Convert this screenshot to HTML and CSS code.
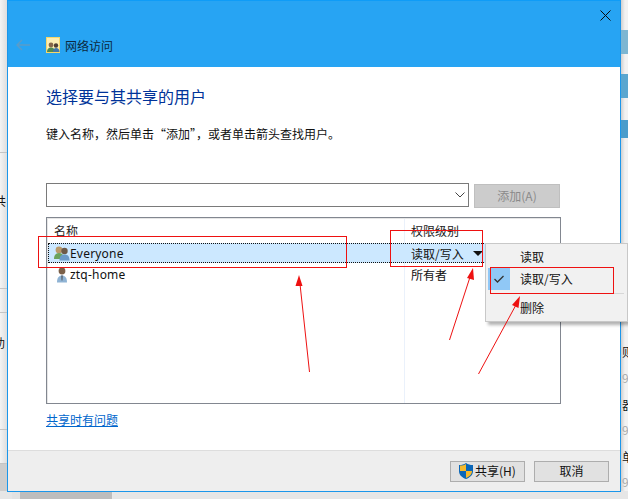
FILE: index.html
```html
<!DOCTYPE html>
<html lang="zh">
<head>
<meta charset="utf-8">
<title>网络访问</title>
<link rel="stylesheet" href="styles.css">
</head>
<body>
<div class="desktop">
  <div class="peek peek-left">
    <span class="frag f1">共</span><span class="frag f2">助</span>
    <i class="rule r1"></i><i class="rule r2"></i><i class="rule r3"></i><i class="rule r4"></i><i class="rule r5"></i>
    <i class="shade"></i>
  </div>
  <div class="peek peek-right">
    <i class="blot b1"></i><i class="blot b2"></i><i class="blot b3"></i>
    <span class="frag g1">则</span><span class="frag g2 dim">9</span><span class="frag g3">器</span><span class="frag g4 dim">9</span><span class="frag g5">单</span><span class="frag g6 dim">9</span>
  </div>
  <div class="under"><i></i></div>

  <main class="window">
    <header class="head">
      <svg class="close" viewBox="0 0 11 11" width="11" height="11"><path d="M.5.5l10 10M10.5.5l-10 10" stroke="#0b0b0b" fill="none"/></svg>
      <div class="nav">
        <svg class="back" viewBox="0 0 14 12" width="14" height="12"><path d="M6 1L1 6l5 5M1 6h13" stroke="#5a9cc9" stroke-width="1.4" fill="none"/></svg>
        <svg class="appicon" viewBox="0 0 14 16" width="14" height="16">
          <rect width="14" height="16" fill="#f5d76a"/><rect x="1" y="1" width="12" height="14" fill="#fbeeb4"/>
          <circle cx="5" cy="8" r="2.400" fill="#86684a"/><path d="M1 15c0-3 1.500-4.500 4-4.500S9 12 9 15z" fill="#4f8a55"/>
          <circle cx="10" cy="8.500" r="2.200" fill="#4d3f35"/><path d="M7 15c0-2.500 1.300-4 3.200-4s3.300 1.500 3.300 4z" fill="#3f78ad"/>
        </svg>
        <span class="title">网络访问</span>
      </div>
    </header>

    <section class="content">
      <h1 class="heading">选择要与其共享的用户</h1>
      <p class="hint">键入名称，然后单击“添加”，或者单击箭头查找用户。</p>
      <div class="addrow">
        <div class="combo">
          <svg viewBox="0 0 10 6" width="10" height="6"><path d="M.5.5L5 5 9.500.5" stroke="#444" fill="none"/></svg>
        </div>
        <div class="addbtn">添加(A)</div>
      </div>
      <div class="list">
        <div class="row rowhead"><span class="cname">名称</span><span class="cperm">权限级别</span></div>
        <div class="row selected">
          <span class="cname">
            <svg class="uicon" viewBox="0 0 16 16" width="16" height="16">
              <circle cx="5" cy="5" r="3.400" fill="#b99a6b"/><path d="M0 14c0-4 2-6 5-6s5 2 5 6z" fill="#6aa35c"/>
              <circle cx="10.500" cy="6" r="3.200" fill="#6d5a48"/><path d="M5.500 15.500c0-4 1.500-6 5-6s5 2 5 6z" fill="#6b9ac8"/>
            </svg>Everyone</span>
          <span class="cperm">读取/写入<i class="caret"></i></span>
        </div>
        <div class="row rowplain">
          <span class="cname">
            <svg class="uicon" viewBox="0 0 16 16" width="16" height="16">
              <circle cx="8" cy="4" r="3.400" fill="#7a5f48"/><path d="M3 15.500c0-5 2-7 5-7s5 2 5 7z" fill="#8fb3d4"/><path d="M7 8.500h2l-.4 5h-1.200z" fill="#5f6f7f"/>
            </svg>ztq-home</span>
          <span class="cperm">所有者</span>
        </div>
      </div>
      <a class="help" href="#">共享时有问题</a>
    </section>

    <footer class="foot">
      <button class="btn" type="button">
        <svg viewBox="0 0 14 16" width="14" height="16"><path d="M7 0c2 1.500 4 2 7 2v6c0 4-3 6.500-7 8-4-1.500-7-4-7-8V2c3 0 5-.5 7-2z" fill="#0a66b8"/><path d="M7 1v7H1V2.600C3.500 2.500 5.500 2 7 1zM7 8h6c0 3.500-2.500 5.500-6 7z" fill="#f6b92b"/></svg>共享(H)
      </button>
      <button class="btn" type="button">取消</button>
    </footer>
  </main>

  <div class="menu">
    <div class="mitem">读取</div>
    <div class="mitem checked"><i class="tick"><svg viewBox="0 0 10 8" width="10" height="8"><path d="M.5 4l3 3 6-6" stroke="#333" stroke-width="1.300" fill="none"/></svg></i>读取/写入</div>
    <div class="msep"></div>
    <div class="mitem">删除</div>
  </div>

  <svg class="marks" viewBox="0 0 628 499" width="628" height="499">
    <g fill="none" stroke="#ee1111">
      <rect x="38.500" y="236.500" width="308" height="31"/>
      <rect x="390.500" y="230.500" width="92" height="36"/>
      <rect x="490.500" y="267.500" width="123" height="26"/>
      <path d="M309.500 372L300 284M449.500 340L471 274M478.500 374L517 303"/>
    </g>
    <g fill="#ee1111">
      <path d="M299 275l-3.500 11h7z"/>
      <path d="M473 268l-6 10 7 2z"/>
      <path d="M520 296l-8 9 6.500 3z"/>
    </g>
  </svg>
</div>
</body>
</html>
```
FILE: styles.css
```css
* { box-sizing: border-box; }
html, body { margin: 0; height: 100%; overflow: hidden; background: #e4e4e4; }
body { font-family: "Noto Sans CJK SC", "Noto Sans", sans-serif; font-size: 12px; color: #111; }
.desktop { position: relative; width: 628px; height: 499px; overflow: hidden; padding-left: 7px; }

.peek { position: absolute; top: 0; height: 499px; }
.peek-left { left: 0; width: 7px; background: linear-gradient(90deg, #f4f4f4, #dedede); overflow: hidden; }
.peek-right { left: 621px; width: 7px; background: linear-gradient(90deg, #cfcfcf, #f2f2f2 4px); overflow: hidden; }
.frag { position: absolute; font-size: 12px; line-height: 14px; white-space: nowrap; }
.dim { color: #aaa; }
.f1 { left: -6px; top: 194px; }
.f2 { left: -7px; top: 336px; }
.g1 { left: 1px; top: 345px; }
.g2 { left: 1px; top: 371px; }
.g3 { left: 1px; top: 398px; }
.g4 { left: 1px; top: 423px; }
.g5 { left: 1px; top: 450px; }
.g6 { left: 1px; top: 475px; }
.rule { position: absolute; left: 0; width: 7px; height: 1px; background: #c4c4c4; }
.r1 { top: 152px; } .r2 { top: 288px; } .r3 { top: 312px; } .r4 { top: 429px; } .r5 { top: 463px; }
.shade { position: absolute; left: 0; top: 464px; width: 7px; height: 35px; background: #cdcdcd; }
.blot { position: absolute; left: 0; width: 7px; }
.b1 { top: 30px; height: 24px; background: #7db6d2; }
.b2 { top: 74px; height: 24px; background: #5aa6cf; }
.b3 { top: 120px; height: 18px; background: #4a9ccb; }
.under { position: absolute; left: 0; top: 491px; width: 628px; height: 8px; background: #e6e6e6; }
.under i { display: block; width: 101px; height: 8px; margin-left: 12px; background: #bdbdbd; border-left: 8px solid #e2e2e2; border-right: 1px solid #e8e8e8; }

.window { position: relative; z-index: 1; width: 614px; height: 492px; display: flex; flex-direction: column; background: #fff; border: 1px solid #1b96ea; border-top-color: #0f9cf7; }
.head { height: 66px; background: #27a4f3; display: flex; flex-direction: column; justify-content: flex-end; position: relative; flex: none; }
.close { position: absolute; right: 9px; top: 9px; }
.nav { display: flex; align-items: center; height: 38px; margin-bottom: 3px; padding: 0 0 0 8px; }
.back { margin-right: 16px; flex: none; }
.appicon { margin-right: 5px; flex: none; }
.title { font-size: 12px; color: #0c2a40; }

.content { flex: 1; padding: 0 59px 0 38px; display: flex; flex-direction: column; min-height: 0; }
.heading { margin: 17px 0 0; font-size: 16px; line-height: 24px; font-weight: 400; color: #003399; }
.hint { margin: 18px 0 0; font-size: 12px; line-height: 16px; color: #111; }
.addrow { display: flex; margin-top: 41px; gap: 5px; align-items: flex-start; }
.combo { width: 423px; height: 24px; border: 1px solid #7a7a7a; background: #fff; display: flex; align-items: center; justify-content: flex-end; padding-right: 3px; }
.addbtn { width: 86px; height: 24px; margin-top: 1px; background: #cccccc; border: 1px solid #bfbfbf; color: #8a8a8a; text-align: center; line-height: 21px; }
.list { width: 515px; height: 187px; margin-top: 9px; border: 1px solid #828790; box-shadow: inset 1px 1px 0 #e6e6e6; position: relative; background: linear-gradient(#eaf1fb, #eaf1fb) 357px 0 / 1px 100% no-repeat #fff; }
.row { display: flex; align-items: center; height: 21px; line-height: 21px; }
.rowhead { height: 25px; padding-bottom: 0; }
.rowplain { margin-top: 1px; }
.cname { width: 364px; padding-left: 7px; display: flex; align-items: center; flex: none; letter-spacing: .2px; }
.cperm { display: flex; align-items: center; }
.rowhead .cname, .rowhead .cperm { color: #222; letter-spacing: 0; }
.uicon { flex: none; }
.selected { height: 20px; background: #cce8ff; outline: 1px dotted #111; outline-offset: -1px; margin-left: 1px; }
.selected .cname { width: 363px; padding-left: 6px; }
.row .cname { font-family: "Noto Sans", "Noto Sans CJK SC", sans-serif; }
.rowhead .cname { font-family: "Noto Sans CJK SC", sans-serif; }
.caret { width: 0; height: 0; margin-left: 9px; border-left: 5px solid transparent; border-right: 5px solid transparent; border-top: 5px solid #111; }
.help { margin-top: 7px; color: #0066cc; line-height: 17px; text-decoration: underline; align-self: flex-start; }

.foot { height: 41px; flex: none; background: #eeeeee; border-top: 1px solid #dddddd; display: flex; justify-content: flex-end; align-items: center; gap: 9px; padding: 0 11px 0 0; }
.btn { width: 75px; height: 21px; padding: 0; background: #e1e1e1; border: 1px solid #adadad; font: inherit; color: #111; display: flex; align-items: center; justify-content: center; gap: 2px; line-height: 1; }

.menu { position: absolute; z-index: 2; left: 485px; top: 243px; width: 143px; height: 79px; background: #f1f1f1; border: 1px solid #c8c8c8; box-shadow: 3px 3px 3px rgba(0,0,0,.3); padding-top: 2px; }
.mitem { height: 22px; line-height: 22px; padding-left: 34px; position: relative; color: #111; }
.tick { position: absolute; left: 2px; top: 0; width: 22px; height: 22px; background: #90c8f6; display: flex; align-items: center; justify-content: center; }
.msep { height: 1px; margin: 3px 3px 3px 34px; background: #d7d7d7; }

.marks { position: absolute; z-index: 3; left: 0; top: 0; pointer-events: none; }
```
